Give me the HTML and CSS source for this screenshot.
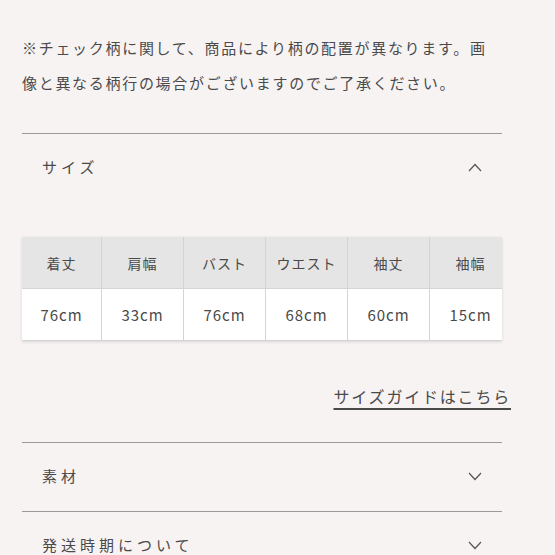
FILE: index.html
```html
<!DOCTYPE html>
<html lang="ja">
<head>
  <meta charset="UTF-8" />
  <meta name="viewport" content="width=device-width, initial-scale=1.0" />
  <title>商品詳細</title>
  <link rel="stylesheet" href="styles.css">
</head>
<body>
  <div class="page">
    <p class="note">※チェック柄に関して、商品により柄の配置が異なります。画像と異なる柄行の場合がございますのでご了承ください。</p>

    <div class="section open">
      <div class="section-head">
        <span class="section-title">サイズ</span>
        <svg class="chevron" width="14" height="9" viewBox="0 0 14 9"><path d="M1 8 L7 1.5 L13 8" fill="none" stroke="#555" stroke-width="1.2"/></svg>
      </div>
      <div class="table-wrap">
        <table class="size-table">
          <tr>
            <th>着丈</th><th>肩幅</th><th>バスト</th><th>ウエスト</th><th>袖丈</th><th>袖幅</th>
          </tr>
          <tr>
            <td>76cm</td><td>33cm</td><td>76cm</td><td>68cm</td><td>60cm</td><td>15cm</td>
          </tr>
        </table>
      </div>
      <div class="guide"><a href="#">サイズガイドはこちら</a></div>
    </div>

    <div class="section">
      <div class="section-head">
        <span class="section-title">素材</span>
        <svg class="chevron" width="14" height="9" viewBox="0 0 14 9"><path d="M1 1 L7 7.5 L13 1" fill="none" stroke="#555" stroke-width="1.2"/></svg>
      </div>
    </div>

    <div class="section">
      <div class="section-head">
        <span class="section-title">発送時期について</span>
        <svg class="chevron" width="14" height="9" viewBox="0 0 14 9"><path d="M1 1 L7 7.5 L13 1" fill="none" stroke="#555" stroke-width="1.2"/></svg>
      </div>
    </div>
  </div>
</body>
</html>
```

FILE: styles.css
```css
body {
  margin: 0;
  background: #f7f3f3;
  color: #4a4a4a;
  font-family: "Noto Sans CJK JP", "Noto Sans", sans-serif;
}
.page {
  padding: 30px 53px 0 22px;
}
.note {
  margin: 0 0 33px;
  font-size: 15px;
  line-height: 35px;
  letter-spacing: 1.7px;
}
.section {
  border-top: 1px solid #9a9a9a;
}
.section-head {
  height: 68px;
  display: flex;
  align-items: center;
  justify-content: space-between;
  padding: 0 20px 2px 20px;
  box-sizing: border-box;
}
.section-title {
  font-size: 15px;
  line-height: 20px;
  letter-spacing: 4px;
}
.chevron {
  display: block;
}
.table-wrap {
  margin-top: 35px;
  overflow: hidden;
  box-shadow: 0 1px 3px rgba(0, 0, 0, 0.12);
}
.size-table {
  border-collapse: collapse;
  table-layout: fixed;
  width: 490px;
}
.size-table th,
.size-table td {
  width: 81px;
  height: 51px;
  text-align: center;
  border: 1px solid #d4d4d4;
  border-top: none;
  padding: 0;
}
.size-table tr > :first-child {
  width: 79px;
  border-left: none;
}
.size-table th {
  background: #e5e5e5;
  font-weight: normal;
  font-size: 14px;
  letter-spacing: 1px;
}
.size-table td {
  background: #fff;
  font-size: 15px;
  letter-spacing: 1px;
}
.guide {
  text-align: right;
  padding: 43px 0 34px;
  margin-right: -9px;
}
.guide a {
  color: #4a4a4a;
  font-size: 16px;
  letter-spacing: 1.8px;
  text-decoration: underline;
  text-underline-offset: 5px;
  text-decoration-thickness: 1.5px;
}
```
